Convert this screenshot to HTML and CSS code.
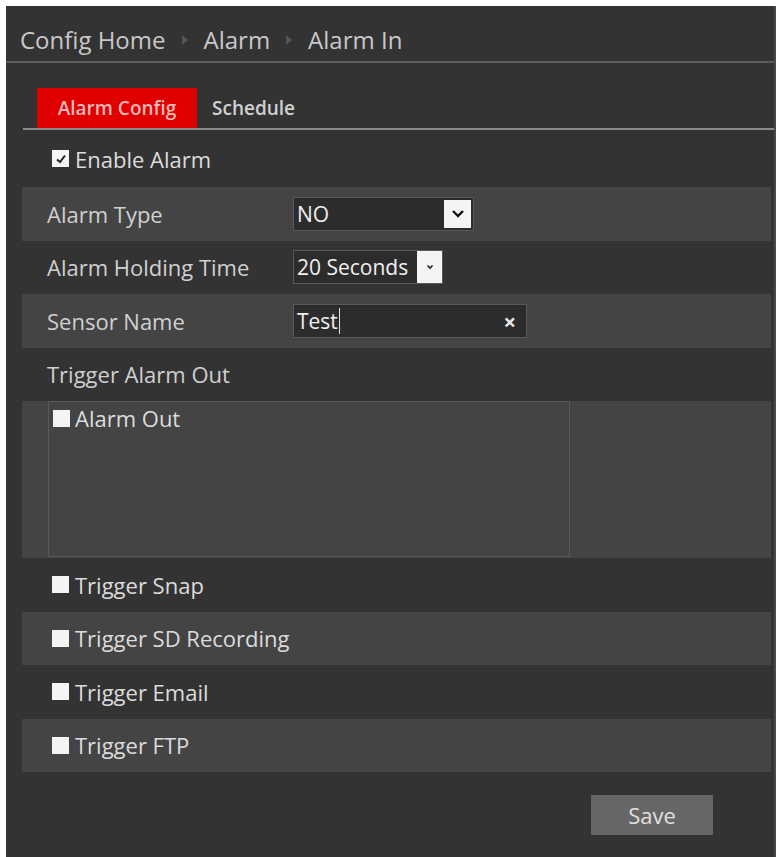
FILE: index.html
```html
<!DOCTYPE html>
<html lang="en">
<head>
    <meta charset="UTF-8">
    <title>Alarm In</title>
    <link rel="stylesheet" href="styles.css">
</head>
<body>
    <div class="panel">
        <div class="crumbs">
            <span>Config Home</span>
            <span class="arrow"></span>
            <span>Alarm</span>
            <span class="arrow"></span>
            <span>Alarm In</span>
        </div>

        <div class="tabs">
            <div class="tab active">Alarm Config</div>
            <div class="tab">Schedule</div>
        </div>

        <div class="rows">
            <div class="row plain check-row">
                <span class="box checked">
                    <svg width="12" height="12" viewBox="0 0 12 12"><path d="M2 6.5 L5 9 L10 2.5" fill="none" stroke="#222" stroke-width="2"/></svg>
                </span>
                <span>Enable Alarm</span>
            </div>

            <div class="row shade">
                <span class="label">Alarm Type</span>
                <div class="select wide">
                    <span class="value">NO</span>
                    <span class="drop big">
                        <svg width="14" height="10" viewBox="0 0 14 10"><path d="M2 2 L7 7 L12 2" fill="none" stroke="#111" stroke-width="2.4"/></svg>
                    </span>
                </div>
            </div>

            <div class="row plain">
                <span class="label">Alarm Holding Time</span>
                <div class="select narrow">
                    <span class="value">20 Seconds</span>
                    <span class="drop small">
                        <svg width="8" height="6" viewBox="0 0 8 6"><path d="M1.5 1.5 L4 4 L6.5 1.5" fill="none" stroke="#222" stroke-width="1.6"/></svg>
                    </span>
                </div>
            </div>

            <div class="row shade">
                <span class="label">Sensor Name</span>
                <div class="text-input">
                    <span class="value">Test<span class="caret"></span></span>
                    <span class="clear">&times;</span>
                </div>
            </div>

            <div class="row plain">
                <span class="label">Trigger Alarm Out</span>
            </div>

            <div class="out-area">
                <div class="out-box">
                    <div class="out-item">
                        <span class="box"></span>
                        <span>Alarm Out</span>
                    </div>
                </div>
            </div>

            <div class="row plain check-row">
                <span class="box"></span>
                <span>Trigger Snap</span>
            </div>
            <div class="row shade check-row">
                <span class="box"></span>
                <span>Trigger SD Recording</span>
            </div>
            <div class="row plain check-row">
                <span class="box"></span>
                <span>Trigger Email</span>
            </div>
            <div class="row shade check-row">
                <span class="box"></span>
                <span>Trigger FTP</span>
            </div>
        </div>

        <div class="actions">
            <button class="save-btn">Save</button>
        </div>
    </div>
</body>
</html>
```

FILE: styles.css
```css
* {
    margin: 0;
    padding: 0;
    box-sizing: border-box;
}

body {
    background: #ffffff;
    padding: 6px 2px 0 6px;
    font-family: 'Open Sans', 'Liberation Sans', sans-serif;
    color: #d4d4d4;
}

.panel {
    background: #333333;
    height: 851px;
    border-right: 2px solid #4a4a4a;
}

.crumbs {
    height: 57px;
    border-bottom: 2px solid #5c5c5c;
    display: flex;
    align-items: center;
    gap: 16px;
    padding: 12px 0 0 14px;
    font-size: 24px;
    color: #c8c8c8;
}

.arrow {
    width: 0;
    height: 0;
    border-top: 5px solid transparent;
    border-bottom: 5px solid transparent;
    border-left: 6px solid #555555;
}

.tabs {
    height: 67px;
    margin-left: 17px;
    padding-left: 14px;
    border-bottom: 2px solid #8a8a8a;
    display: flex;
    align-items: flex-end;
}

.tab {
    height: 40px;
    display: flex;
    align-items: center;
    font-size: 19px;
    font-weight: 600;
    color: #d0d0d0;
    padding: 0 15px;
}

.tab.active {
    background: #e00000;
    color: #f2b8b8;
    width: 160px;
    justify-content: center;
    padding: 0;
}

.rows {
    margin: 0 3px 0 16px;
}

.row {
    height: 53.5px;
    display: flex;
    align-items: center;
    font-size: 22px;
}

.row.plain {
    background: #333333;
}

.row.shade {
    background: #444444;
}

.row:first-child {
    height: 57px;
}

.label {
    width: 271px;
    padding-left: 25px;
    color: #d0d0d0;
}

.check-row {
    padding-left: 30px;
    gap: 6px;
    color: #dcdcdc;
}

.box {
    width: 17px;
    height: 17px;
    background: #f4f4f4;
    display: inline-flex;
    align-items: center;
    justify-content: center;
    flex-shrink: 0;
}

.select,
.text-input {
    height: 34px;
    background: #2c2c2c;
    border: 1px solid #595959;
    display: flex;
    align-items: center;
    justify-content: space-between;
    color: #f0f0f0;
    font-size: 21px;
}

.select.wide {
    width: 181px;
}

.select.narrow {
    width: 150px;
}

.value {
    padding-left: 3px;
    display: flex;
    align-items: center;
    white-space: nowrap;
}

.drop {
    background: #f4f4f4;
    display: flex;
    align-items: center;
    justify-content: center;
    align-self: stretch;
    flex-shrink: 0;
}

.drop.big {
    width: 27px;
    margin: 2px;
}

.drop.small {
    width: 25px;
}

.text-input {
    width: 234px;
}

.caret {
    display: inline-block;
    width: 1px;
    height: 26px;
    background: #e0e0e0;
    margin-left: 1px;
}

.clear {
    font-size: 22px;
    font-weight: 700;
    color: #e8e8e8;
    padding-right: 10px;
}

.out-area {
    background: #444444;
    height: 157px;
    padding-left: 26px;
}

.out-box {
    width: 522px;
    height: 156px;
    border: 1px solid #595959;
    padding: 1px 0 0 4px;
}

.out-item {
    display: flex;
    align-items: center;
    gap: 5px;
    font-size: 22px;
    color: #dcdcdc;
}

.actions {
    display: flex;
    justify-content: flex-end;
    padding: 23px 61px 0 0;
}

.save-btn {
    width: 122px;
    height: 40px;
    background: #666666;
    border: none;
    color: #e0e0e0;
    font-family: 'Open Sans', 'Liberation Sans', sans-serif;
    font-size: 22px;
}
```
